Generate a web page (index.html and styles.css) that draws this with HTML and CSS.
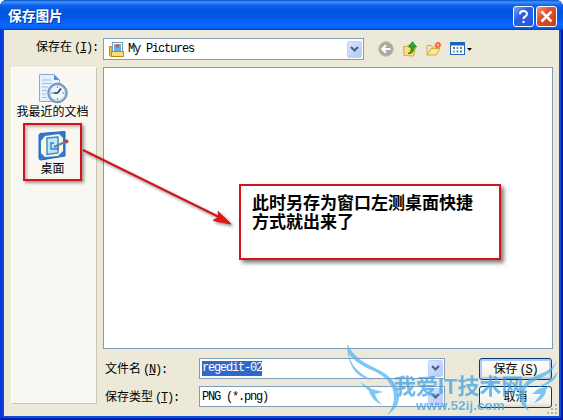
FILE: index.html
```
<!DOCTYPE html>
<html lang="zh-CN">
<head>
    <meta charset="utf-8">
    <title>保存图片</title>
    <link rel="stylesheet" href="styles.css">
</head>
<body>
    <div class="window">
        <div class="titlebar">
            <span class="title">保存图片</span>
            <div class="winbtn help">
                <svg width="19" height="19" viewBox="0 0 19 19"><path d="M6 7.2C6 3 13 3 13 7C13 9.6 9.5 9.3 9.5 12M9.5 13.8V16" fill="none" stroke="#fff" stroke-width="2"/></svg>
            </div>
            <div class="winbtn close">
                <svg width="19" height="19" viewBox="0 0 19 19"><path d="M4.500 4.500L14.500 14.500M14.500 4.500L4.500 14.500" stroke="#fff" stroke-width="2.5"/></svg>
            </div>
        </div>

        <div class="client">
            <div class="lookin">
                <label>保存在<span class="en">(<u>I</u>):</span></label>
                <div class="combo">
                    <svg class="pics" width="17" height="17" viewBox="0 0 17 17">
                        <path d="M1.5 5.5H4V14H14.5V15.5H2.5L1.5 14.5Z" fill="#f3c64b" stroke="#b88a1c"/>
                        <rect x="4.5" y="1.5" width="10" height="10" fill="#fff" stroke="#7d9bb5"/>
                        <rect x="6" y="3" width="7" height="7" fill="#63b3e6"/>
                        <circle cx="9.5" cy="5" r="1.8" fill="#d9502e"/>
                        <path d="M3.500 10.500H15.5V15.5H3.5Z" fill="#fbdc77" stroke="#b88a1c"/>
                    </svg>
                    <span class="en">My Pictures</span>
                    <div class="drop"><svg width="9" height="7" viewBox="0 0 9 7"><path d="M1 1L4.5 4.5L8 1" fill="none" stroke="#4d6185" stroke-width="2.2"/></svg></div>
                </div>
                <div class="tools">
                    <svg width="16" height="16" viewBox="0 0 16 16">
                        <circle cx="8" cy="8" r="7.2" fill="#aaa9a1" stroke="#b9b7ad"/>
                        <path d="M12.5 8H5M8 4.2L4.2 8L8 11.8" fill="none" stroke="#fff" stroke-width="2"/>
                    </svg>
                    <svg width="16" height="16" viewBox="0 0 16 16">
                        <path d="M1.5 5.5H5L6 4H9V7H13.5L11.5 15L2 14.5Z" fill="#f9e07c" stroke="#d3ab3c"/>
                        <path d="M6 12.5C9 11.5 9.5 9 9 6H6.5L10.5 .8L14.5 6H12C12 10 10.5 12.8 6 12.5Z" fill="#35a335" stroke="#147514" stroke-width=".8"/>
                    </svg>
                    <svg width="16" height="16" viewBox="0 0 16 16">
                        <path d="M1 4.5H5L6 6H10.5V8" fill="#f9e07c" stroke="#d3ab3c"/>
                        <path d="M1 4.5V14H10L14 7.5H5L1.5 13.5" fill="#fbe897" stroke="#d3ab3c"/>
                        <path d="M12 .8V7.2M8.8 4H15.2M9.8 1.8L14.2 6.2M14.2 1.8L9.8 6.2" stroke="#f0522d" stroke-width="1.3"/>
                        <circle cx="12" cy="4" r="1.2" fill="#ffd569"/>
                    </svg>
                    <svg class="view" width="24" height="16" viewBox="0 0 24 16">
                        <rect x=".5" y="1.5" width="14" height="12" fill="#fff" stroke="#1f69bd"/>
                        <rect x="0" y="1" width="15" height="3.5" fill="#1a65c0"/>
                        <path d="M3 6h2v2H3zM10 9.5h2v2h-2z" fill="#4377cd"/>
                        <path d="M6.5 6h2v2h-2zM3 9.5h2v2H3z" fill="#8b9d98"/>
                        <path d="M10 6h2v2h-2zM6.5 9.5h2v2h-2z" fill="#4b9b64"/>
                        <path d="M17 7H22L19.5 9.7Z" fill="#000"/>
                    </svg>
                </div>
            </div>

            <div class="places">
                <div class="place">
                    <svg width="32" height="32" viewBox="0 0 32 32">
                        <path d="M2.5 1.5H17L22.5 7V28.5H2.5Z" fill="#e4f0ff" stroke="#86a9df"/>
                        <path d="M17 1.5V7H22.5Z" fill="#5a8fe0"/>
                        <path d="M5 7H14M5 10.5H15M5 14H11M5 17.5H10M5 21H9M5 24.5H10" stroke="#a3bfe8"/>
                        <circle cx="20.5" cy="20" r="9.7" fill="#8aa6c5" stroke="#6486ae"/>
                        <circle cx="20.5" cy="20" r="7.5" fill="#eef6fa" stroke="#c9dbe8"/>
                        <path d="M20.5 13.5V15M20.5 25V26.5M14 20H15.5M25.5 20H27" stroke="#54779b"/>
                        <path d="M24 15.5L20.5 20H16.5" fill="none" stroke="#223c5c" stroke-width="1.6"/>
                    </svg>
                    <span>我最近的文档</span>
                </div>
                <div class="place">
                    <svg width="32" height="32" viewBox="0 0 32 32">
                        <path d="M3 3.5L28 1.5V26L4 30Q2 30 2 28V5Z" fill="#2e7ad8" stroke="#2865bb"/>
                        <path d="M8 6L22 4L26 8V21L21 26L8 27L4 23V11Z" fill="#fff8d7"/>
                        <path d="M10 8L21 7V23L10 24.5Z" fill="#c3e6fb" stroke="#398ad2" stroke-width="1.4"/>
                        <path d="M17 13H14V19H21V16" fill="none" stroke="#2d83d0" stroke-width="1.4"/>
                        <path d="M17 17L29 11.5" stroke="#5c84a8" stroke-width="2.2"/>
                        <circle cx="29.5" cy="11.5" r="2" fill="#d4343a"/>
                    </svg>
                    <span>桌面</span>
                </div>
            </div>

            <div class="filelist"></div>

            <div class="fields">
                <label>文件名<span class="en">(<u>N</u>):</span></label>
                <div class="combo">
                    <span class="en selected">regedit-02</span>
                    <div class="drop"><svg width="9" height="7" viewBox="0 0 9 7"><path d="M1 1L4.5 4.5L8 1" fill="none" stroke="#4d6185" stroke-width="2.2"/></svg></div>
                </div>
                <button class="default">保存<span class="en">(<u>S</u>)</span></button>
                <label>保存类型<span class="en">(<u>T</u>):</span></label>
                <div class="combo">
                    <span class="en">PNG (*.png)</span>
                    <div class="drop"><svg width="9" height="7" viewBox="0 0 9 7"><path d="M1 1L4.5 4.5L8 1" fill="none" stroke="#4d6185" stroke-width="2.2"/></svg></div>
                </div>
                <button>取消</button>
            </div>
        </div>
    </div>

    <svg class="grip" width="12" height="12" viewBox="0 0 12 12">
        <path d="M9 1h2v2h-2zM5 5h2v2h-2zM9 5h2v2h-2zM1 9h2v2h-2zM5 9h2v2h-2zM9 9h2v2h-2z" fill="#b8b4a2"/>
    </svg>

    <!-- red marks -->
    <div class="mark"></div>
    <svg class="arrow" width="160" height="90" viewBox="0 0 160 90">
        <path d="M2 10L138 77" stroke="#d3131b" stroke-width="2"/>
        <path d="M150 84L132 80.5L138 77L137 71.5Z" fill="#ee1111" stroke="#d3131b"/>
    </svg>
    <div class="note">此时另存为窗口左测桌面快捷<br>方式就出来了</div>

    <!-- site watermark -->
    <div class="watermark">
        <svg width="223" height="80" viewBox="0 0 223 80">
            <path d="M7 4C14 17 24 23 35 28C49 34 59 45 59 56C59 65 54 71 47 75C54 67 55 59 53 50C49 38 39 33 27 28C17 23 12 18 9 14C10 24 18 33 32 40C18 38 8 29 7 4Z"/>
            <path d="M20 42L32 49L43 52L35 54C36 58 39 62 42 65C34 61 31 57 29 51Z"/>
            <path d="M217 20C213 33 206 36 198 39C188 44 183 50 184 57C185 63 188 68 189 71C181 66 178 60 181 51C184 41 192 37 200 34C208 31 213 28 217 20Z"/>
            <path d="M218 31C216 41 209 45 198 47C206 43 213 39 218 31ZM209 46L198 49L192 54L201 54L194 63C202 60 206 55 206 50Z"/>
        </svg>
        <div class="site">我爱IT技术网</div>
        <div class="url">www.52ij.com</div>
    </div>
</body>
</html>
```
FILE: styles.css
```
* {
    box-sizing: border-box;
}

body {
    margin: 0;
    background-color: #fff;
    font-family: "Liberation Sans", "Noto Sans CJK SC", sans-serif;
    font-size: 12px;
    line-height: 14px;
    color: #000;
    overflow: hidden;
}

svg {
    display: block;
}

.window {
    display: flex;
    flex-direction: column;
    width: 563px;
    height: 420px;
    padding: 0 4px 4px;
    background-color: #0a50df;
    border-radius: 7px 7px 0 0;
    box-shadow: inset 1px 0 #0831d9, inset -2px -2px #0019a8, inset 3px 0 2px #0540d0;
}

.titlebar {
    display: flex;
    align-items: center;
    height: 30px;
    margin: 0 -4px;
    padding: 3px 6px 0 8px;
    gap: 2px;
    border-radius: 7px 7px 0 0;
    background: linear-gradient(#0a4fd0 0%, #3c93fc 7%, #0c62ec 18%, #0054e3 35%, #0057e8 60%, #0568ff 80%, #0563f5 92%, #0041c4 100%);
}

.title {
    flex: 1;
    color: #fff;
    font-size: 13.7px;
    font-weight: bold;
    text-shadow: 1px 1px #0a3699;
}

.winbtn {
    width: 21px;
    height: 21px;
    border: 1px solid #fff;
    border-radius: 3px;
    background: linear-gradient(135deg, #7ba2f4, #2c5fe0 40%, #2458d8);
}

.close {
    background: linear-gradient(135deg, #ec9a82, #dc4f28 40%, #c93d14);
}

.client {
    flex: 1;
    display: grid;
    grid-template-columns: 86px 450px;
    grid-template-rows: 29px 282px 47px;
    column-gap: 6px;
    padding: 8px 6px 0 7px;
    background-color: #ece9d8;
}

.en {
    font-family: "Liberation Mono", monospace;
    font-size: 12px;
    letter-spacing: -1.2px;
    white-space: pre;
}

.lookin {
    grid-column: 1 / 3;
    display: flex;
    align-items: flex-start;
}

.lookin label {
    width: 92px;
    padding: 2px 0 0 25px;
    white-space: nowrap;
}

label .en {
    margin-left: 2px;
}

.combo {
    display: flex;
    align-items: center;
    height: 21px;
    padding: 1px 1px 1px 2px;
    border: 1px solid #7f9db9;
    background-color: #fff;
}

.lookin .combo {
    width: 261px;
    height: 22px;
    padding-left: 4px;
}

.pics {
    margin-right: 3px;
}

.drop {
    display: flex;
    align-items: center;
    justify-content: center;
    width: 15px;
    height: 17px;
    margin-left: auto;
    border-radius: 2px;
    background: linear-gradient(135deg, #dae5fe, #b4c9f9);
    border: 1px solid #c1d1fa;
}

.tools {
    display: flex;
    gap: 8px;
    margin: 3px 0 0 14px;
}

.places {
    grid-row: 2 / 4;
    grid-column: 1;
    height: 337px;
    padding: 5px 3px 0 0;
    background-color: #f9f7f2;
    border: 1px solid #fff;
    border-right-color: #c9c6b6;
    border-bottom-color: #c9c6b6;
}

.place {
    display: flex;
    flex-direction: column;
    align-items: center;
    height: 57px;
    line-height: 15px;
    white-space: nowrap;
}

.filelist {
    border: 1px solid #7f9db9;
    background-color: #fff;
}

.fields {
    display: grid;
    grid-template-columns: 96px 246px 74px;
    grid-template-rows: 21px 21px;
    row-gap: 7px;
    column-gap: 0;
    padding-top: 9px;
}

.fields label {
    padding: 4px 0 0 2px;
    white-space: nowrap;
}

.selected {
    height: 15px;
    background-color: #316ac5;
    color: #fff;
}

button {
    width: 73px;
    height: 22px;
    margin-left: 34px;
    padding: 0;
    border: 1px solid #003c74;
    border-radius: 3px;
    background: linear-gradient(#fff, #f3f2ea 80%, #dcd8cc);
    font-family: inherit;
    font-size: 12px;
    line-height: 14px;
}

button.default {
    box-shadow: inset 0 0 0 2px #b5cbf2;
}

button .en {
    margin-left: 2px;
}

.grip {
    position: absolute;
    left: 546px;
    top: 403px;
}

.mark {
    position: absolute;
    left: 23px;
    top: 123px;
    width: 59px;
    height: 58px;
    border: 2px solid #d3131b;
    box-shadow: 2px 2px 3px rgba(0, 0, 0, .4), inset 2px 2px 3px rgba(0, 0, 0, .25);
}

.arrow {
    position: absolute;
    left: 81px;
    top: 140px;
    filter: drop-shadow(2px 2px 1.5px rgba(0, 0, 0, .45));
}

.note {
    position: absolute;
    left: 239px;
    top: 184px;
    width: 262px;
    height: 76px;
    padding: 8px 11px;
    border: 2px solid #d3131b;
    background-color: #fff;
    box-shadow: 3px 3px 4px rgba(0, 0, 0, .5);
    font-size: 17px;
    font-weight: bold;
    line-height: 19px;
    white-space: nowrap;
}

.watermark {
    position: absolute;
    left: 340px;
    top: 340px;
    width: 223px;
    height: 80px;
    color: #3aa0e8;
    fill: #4db2f4;
    opacity: .72;
}

.site,
.url {
    position: absolute;
    white-space: nowrap;
    font-weight: bold;
}

.site {
    left: 54px;
    top: 34px;
    font-size: 22px;
    line-height: 26px;
}

.url {
    left: 76px;
    top: 58px;
    font-size: 13.5px;
    line-height: 15px;
}
```
